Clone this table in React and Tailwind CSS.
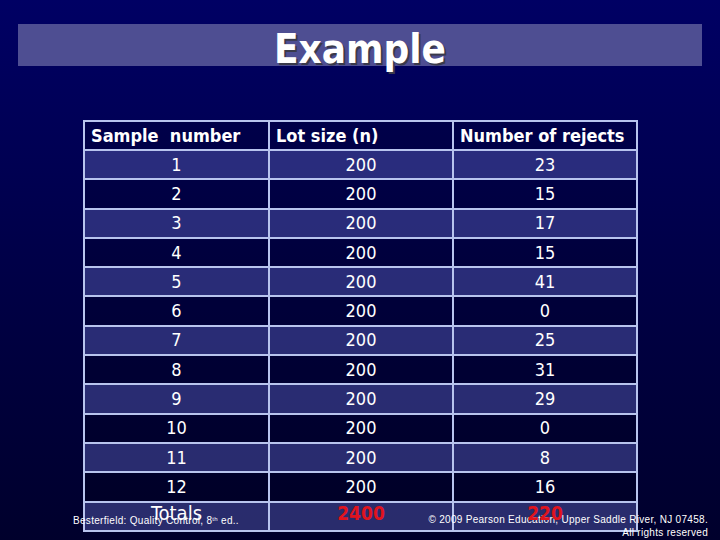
import React from "react";

const rows = [
  [1, 200, 23],
  [2, 200, 15],
  [3, 200, 17],
  [4, 200, 15],
  [5, 200, 41],
  [6, 200, 0],
  [7, 200, 25],
  [8, 200, 31],
  [9, 200, 29],
  [10, 200, 0],
  [11, 200, 8],
  [12, 200, 16],
];

const font = { fontFamily: '"DejaVu Sans Condensed", "DejaVu Sans", sans-serif' };
const small = { fontFamily: '"Liberation Sans", Arial, sans-serif' };

const App = () => {
  return (
    <div className="relative w-[720px] h-[540px] overflow-hidden bg-gradient-to-b from-[#000064] to-[#00002c]" style={font}>
      {/* title bar */}
      <div className="pt-[24px] px-[18px]">
        <div className="h-[42px] bg-[#4e4e92] flex justify-center">
          <h1 className="text-[40px] font-bold text-white leading-none mt-[5px] [text-shadow:2px_2px_0_#3a3a4a]">
            Example
          </h1>
        </div>
      </div>

      {/* table */}
      <div className="mt-[54px] pl-[83px]">
        <table className="border-collapse text-white">
          <thead>
            <tr className="h-[29px] bg-black/15">
              <th className="w-[185px] border-2 border-[#b8c4ee] text-left font-bold text-[18px] pl-[6px]">Sample&nbsp; number</th>
              <th className="w-[184px] border-2 border-[#b8c4ee] text-left font-bold text-[18px] pl-[6px]">Lot size (n)</th>
              <th className="w-[184px] border-2 border-[#b8c4ee] text-left font-bold text-[18px] pl-[6px]">Number of rejects</th>
            </tr>
          </thead>
          <tbody>
            {rows.map((r, i) => (
              <tr key={i} className={`h-[29.3px] ${i % 2 === 0 ? "bg-[#4a50a0]/55" : "bg-black/15"}`}>
                {r.map((v, j) => (
                  <td key={j} className="border-2 border-[#b8c4ee] text-center text-[18px] leading-none">{v}</td>
                ))}
              </tr>
            ))}
            <tr className="h-[29.3px] bg-[#4a50a0]/55">
              <td className="border-2 border-[#b8c4ee] text-center text-[20px] leading-none">
                <span className="relative z-10 -top-[3px]">Totals</span>
              </td>
              <td className="border-2 border-[#b8c4ee] text-center text-[19px] leading-none font-bold text-[#e0141e]">
                <span className="relative z-10 -top-[3px]">2400</span>
              </td>
              <td className="border-2 border-[#b8c4ee] text-center text-[19px] leading-none font-bold text-[#e0141e]">
                <span className="relative z-10 -top-[3px]">220</span>
              </td>
            </tr>
          </tbody>
        </table>
      </div>

      {/* footer notes */}
      <div className="absolute left-[73px] top-[513px] text-[10px] text-white tracking-[0.3px]" style={small}>
        Besterfield: Quality Control, 8<sup className="text-[6px]">th</sup> ed..
      </div>
      <div className="absolute right-[12px] top-[513px] text-right text-[10px] leading-[13px] text-white tracking-[0.3px]" style={small}>
        <div>© 2009 Pearson Education, Upper Saddle River, NJ 07458.</div>
        <div>All rights reserved</div>
      </div>
    </div>
  );
};

export default App;
